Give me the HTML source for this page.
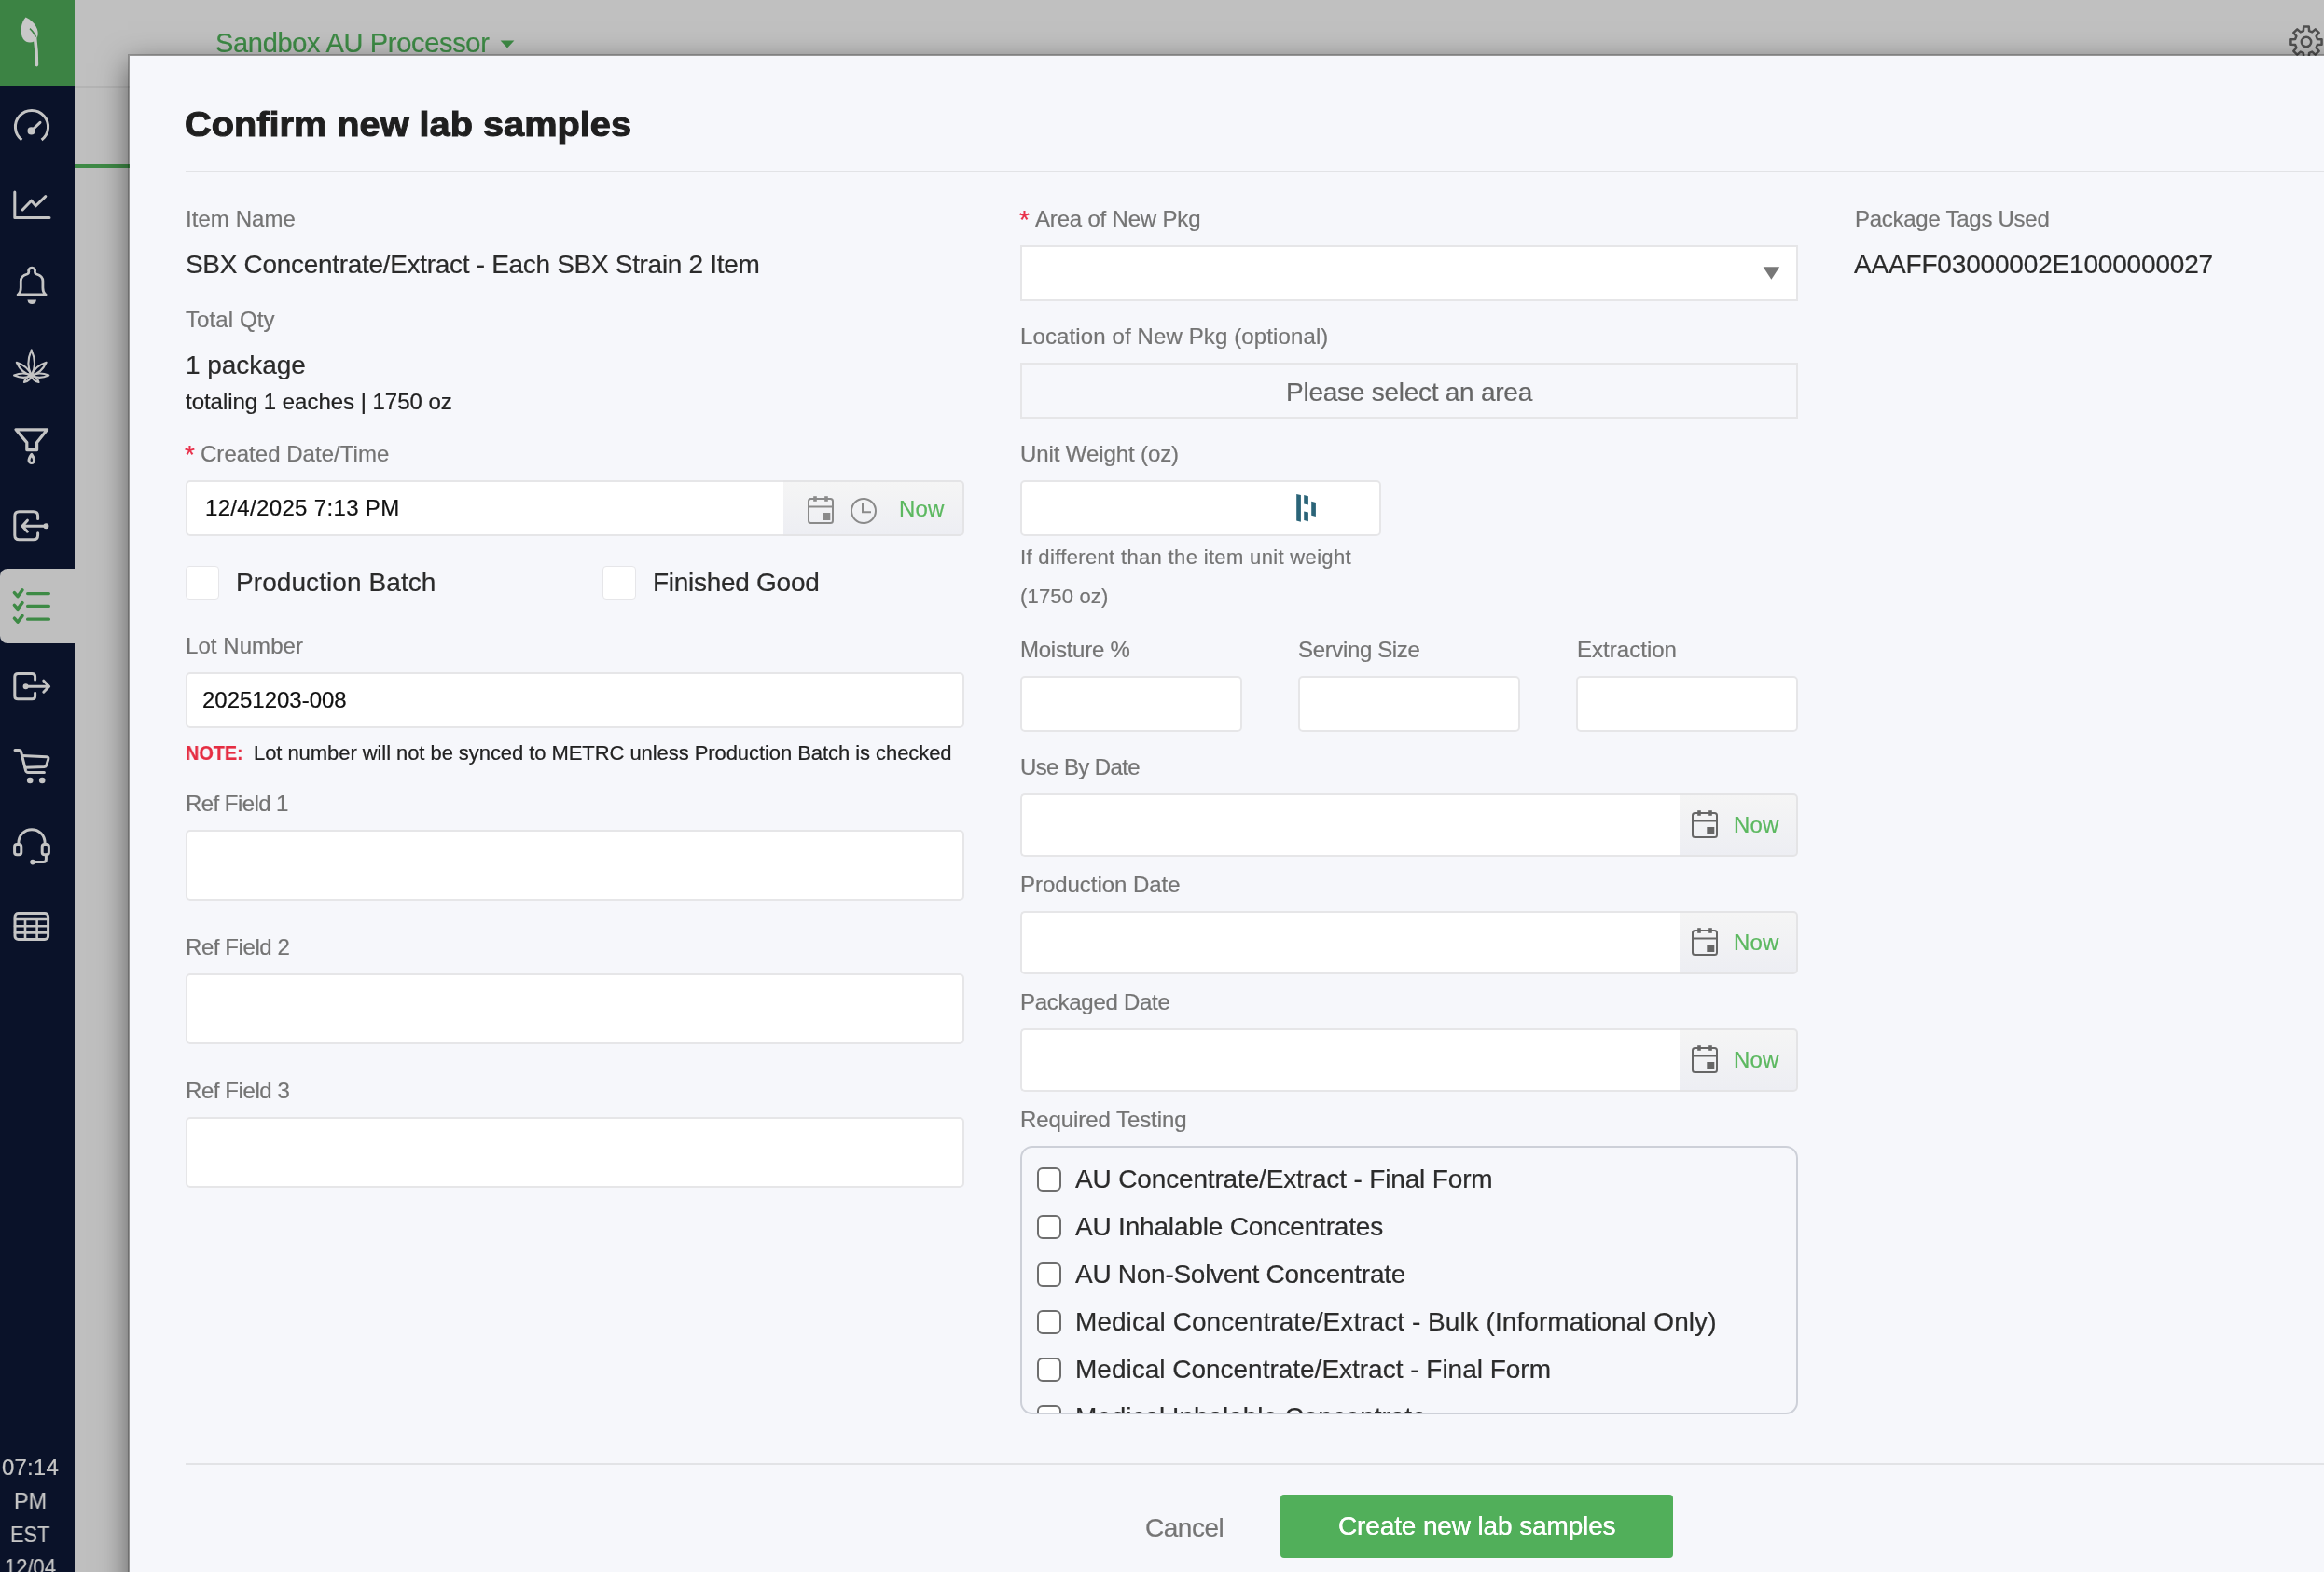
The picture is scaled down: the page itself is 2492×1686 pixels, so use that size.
<!DOCTYPE html>
<html><head><meta charset="utf-8"><title>Confirm new lab samples</title>
<style>
html,body{margin:0;padding:0}
body{width:2492px;height:1686px;overflow:hidden;position:relative;background:#bfbfbf;font-family:"Liberation Sans",sans-serif}
.abs{position:absolute}
.t{position:absolute;white-space:pre;line-height:1;font-family:"Liberation Sans",sans-serif;-webkit-text-stroke:0.22px currentColor;will-change:transform}
.inp{position:absolute;box-sizing:border-box;background:#fff;border:2px solid #e6e6e8;border-radius:5px}
.addon{position:absolute;box-sizing:border-box;background:linear-gradient(#f5f5f5,#edeef3);border:2px solid #e4e4e6;border-left:none;border-radius:0 5px 5px 0}
.cb{position:absolute;left:16px;width:26px;height:26px;box-sizing:border-box;border:2.2px solid #6e6e6e;border-radius:6px;background:#fff}
.bigcb{position:absolute;width:36px;height:36px;box-sizing:border-box;border:1.5px solid #e6e6e9;border-radius:4px;background:#fff}
svg{position:absolute;overflow:visible}
.ic{fill:none;stroke:#c4c4c4;stroke-width:3;stroke-linecap:round;stroke-linejoin:round}
</style></head>
<body>
<!-- dimmed page behind modal -->
<div class="abs" style="left:80px;top:0;width:2412px;height:92px;background:#c0c0c0;border-bottom:2px solid #b4b4b4"></div>
<div class="abs" style="left:80px;top:176px;width:70px;height:4px;background:#3e8a46"></div>

<!-- gear -->
<svg style="left:2453px;top:25px" width="40" height="40" viewBox="-20 -20 40 40">
 <g fill="none" stroke="#505050" stroke-width="2.5" stroke-linejoin="round">
 <path d="M3.08 -11.91 L2.77 -16.57 L-2.77 -16.57 L-3.08 -11.91 L-6.24 -10.60 L-9.76 -13.68 L-13.68 -9.76 L-10.60 -6.24 L-11.91 -3.08 L-16.57 -2.77 L-16.57 2.77 L-11.91 3.08 L-10.60 6.24 L-13.68 9.76 L-9.76 13.68 L-6.24 10.60 L-3.08 11.91 L-2.77 16.57 L2.77 16.57 L3.08 11.91 L6.24 10.60 L9.76 13.68 L13.68 9.76 L10.60 6.24 L11.91 3.08 L16.57 2.77 L16.57 -2.77 L11.91 -3.08 L10.60 -6.24 L13.68 -9.76 L9.76 -13.68 L6.24 -10.60 Z"/>
 <circle cx="0" cy="0" r="5.2"/>
 </g>
</svg>

<div class="t" style="top:32px;font-size:29px;color:#3d8a45;letter-spacing:-0.316px;left:231.00px;">Sandbox AU Processor</div>
<svg style="left:536px;top:43px" width="16" height="9" viewBox="0 0 16 9"><path d="M0.6 0.6 H15.4 L8 8.4 Z" fill="#3d8a45"/></svg>
<!-- sidebar -->
<div class="abs" style="left:0;top:0;width:80px;height:1686px;background:#0a1229"></div>
<div class="abs" style="left:0;top:0;width:80px;height:92px;background:#3c8344"></div>
<div class="abs" style="left:0;top:610px;width:80px;height:80px;background:#bfbfbf;border-radius:8px 0 0 8px"></div>
<svg style="left:0;top:0" width="80" height="1686" viewBox="0 0 80 1686">
<path d="M27.6 18.6 C22.5 24 20.5 35.5 25 42 C29 47.5 37.5 46.5 40 40 C42.5 33 38 23.5 27.6 18.6 Z" fill="#c8c8c8"/>
<path d="M32 30.6 Q37.4 35.6 39.4 42.4" fill="none" stroke="#3c8344" stroke-width="1.5"/>
<path d="M37.6 41 Q39.6 55 39.4 69.6" fill="none" stroke="#c8c8c8" stroke-width="3.6" stroke-linecap="round"/>
<g class="ic">
<path d="M23.41 150.06 A17.6 17.6 0 1 1 44.59 150.06" stroke-linecap="butt"/>
<path d="M34 140 L43 131.4"/>
<circle cx="33.6" cy="140.4" r="2.6" fill="#c4c4c4"/>
<path d="M15.8 206 V233.4 H53"/>
<path d="M24.2 225 L33.6 215.2 L38.4 220.8 L48.8 210.6"/>
<path d="M19.2 316 H49"/>
<path d="M20 315.4 C22 313.4 22.3 311 22.3 308.6 V301.6 C22.3 297.6 25.2 295 29.2 294 C30.4 293.6 30.8 293 30.8 291.8 A3.5 3.5 0 1 1 37.4 291.8 C37.4 293 37.8 293.6 39 294 C43 295 45.9 297.6 45.9 301.6 V308.6 C45.9 311 46.2 313.4 48.2 315.4" stroke-width="2.8"/>
<path d="M29.4 321.4 H39 Q38.2 326 34.2 326 Q30.2 326 29.4 321.4 Z" fill="#c4c4c4" stroke="none"/>
</g>
<g fill="none" stroke="#c4c4c4" stroke-width="2.1" stroke-linejoin="round">
<path d="M33.7 402.8 Q40.3 390.5 33.7 375.4 Q27.1 390.5 33.7 402.8Z"/>
<path d="M33.7 402.8 Q44.3 400.4 49.6 388.8 Q37.4 392.6 33.7 402.8Z"/>
<path d="M33.7 402.8 Q30.0 392.6 17.8 388.8 Q23.1 400.4 33.7 402.8Z"/>
<path d="M33.7 402.8 Q42.1 407.0 52.3 402.5 Q42.0 398.4 33.7 402.8Z"/>
<path d="M33.7 402.8 Q25.4 398.4 15.1 402.5 Q25.3 407.0 33.7 402.8Z"/>
<path d="M33.7 402.8 Q34.9 408.5 41.5 410.0 Q39.4 403.6 33.7 402.8Z"/>
<path d="M33.7 402.8 Q28.0 403.6 25.9 410.0 Q32.5 408.5 33.7 402.8Z"/>
</g>
<g class="ic">
<path d="M17 460.8 H50.6 L39.6 474.6 V482.6 H28.8 V474.6 Z" stroke-width="3.2"/>
<path d="M33.8 487.4 C31.4 491 31 492.4 31 493.8 A2.8 2.8 0 0 0 36.6 493.8 C36.6 492.4 36.2 491 33.8 487.4 Z" stroke-width="3"/>
<path d="M40.6 556.4 V553.6 Q40.6 548.8 35.8 548.8 H20.6 Q15.8 548.8 15.8 553.6 V574 Q15.8 578.8 20.6 578.8 H35.8 Q40.6 578.8 40.6 574 V571.8"/>
<path d="M24.4 564.2 H49 M29.4 558.2 L24 564.2 L29.4 570.2"/>
<circle cx="49.4" cy="564.2" r="2.2" fill="#c4c4c4" stroke-width="1.6"/>
<path d="M37.6 729 V725.8 Q37.6 722.4 34.2 722.4 H19.2 Q15.8 722.4 15.8 725.8 V746.4 Q15.8 749.8 19.2 749.8 H34.2 Q37.6 749.8 37.6 746.4 V743.2"/>
<path d="M27.8 736.2 H52.2 M46.8 730.2 L52.6 736.2 L46.8 742.2"/>
<circle cx="27.6" cy="736.2" r="2.2" fill="#c4c4c4" stroke-width="1.6"/>
<path d="M16 804.6 H20.2 Q22 804.6 22.6 806.4 L27.6 826.6 Q28.2 828.4 30 828.4 H47.4"/>
<path d="M24 810.6 L50 811.8 Q52.4 812 51.8 814.2 L49.8 820.6 Q49.2 822.2 47.4 822.4 L27 823.2"/>
<circle cx="32.2" cy="837" r="3.3" fill="#c4c4c4" stroke="none"/><circle cx="45.2" cy="837" r="3.3" fill="#c4c4c4" stroke="none"/>
<path d="M19.8 905 C19.8 884.6 48.2 884.6 48.2 905"/>
<rect x="15.6" y="905.4" width="7.2" height="11.4" rx="2.6"/><rect x="45.2" y="905.4" width="7.2" height="11.4" rx="2.6"/>
<path d="M49.4 917 V921.6 Q49.4 924.6 46.4 924.6 H36"/>
<circle cx="35" cy="924.6" r="2" fill="#c4c4c4" stroke-width="1.6"/>
<rect x="16" y="979.6" width="35.6" height="28" rx="3.6"/>
<path d="M16 986 H51.6 M16 993.2 H51.6 M16 1000.4 H51.6 M27 986 V1007.6 M39.6 986 V1007.6" stroke-width="2.6"/>
</g>
<g fill="none" stroke="#3d8a45" stroke-width="3.2" stroke-linecap="round" stroke-linejoin="round">
<path d="M29.6 636.6 H52.4"/><path d="M15.4 635.6 L19 639.6 L24 632.8" stroke-width="3.5"/>
<path d="M29.6 650.4 H52.4"/><path d="M15.4 649.4 L19 653.4 L24 646.6" stroke-width="3.5"/>
<path d="M29.6 664.2 H52.4"/><path d="M15.4 663.2 L19 667.2 L24 660.4" stroke-width="3.5"/>
</g>
</svg>

<!-- modal -->
<div class="abs" style="left:137px;top:58px;width:2500px;height:1800px;background:#f6f7fb;border:2px solid rgba(0,0,0,.22);background-clip:padding-box;box-shadow:0 10px 30px rgba(0,0,0,.5)"></div>

<!-- title -->
<div class="t" style="left:198px;top:115.5px;font-size:36px;font-weight:700;color:#1f1f1f;-webkit-text-stroke:1px #1f1f1f;transform-origin:0 0;transform:scaleX(1.1034)">Confirm new lab samples</div>
<div class="abs" style="left:199px;top:183px;width:2300px;height:2px;background:#e2e3e6"></div>
<div class="abs" style="left:199px;top:1569px;width:2300px;height:2px;background:#e2e3e6"></div>

<!-- column 1 fields -->
<div class="inp" style="left:199px;top:515px;width:643px;height:60px;border-radius:5px 0 0 5px;border-right:none"></div>
<div class="addon" style="left:840px;top:515px;width:194px;height:60px"></div>
<div class="bigcb" style="left:199px;top:607px"></div>
<div class="bigcb" style="left:646px;top:607px"></div>
<div class="inp" style="left:199px;top:721px;width:835px;height:60px"></div>
<div class="inp" style="left:199px;top:890px;width:835px;height:76px"></div>
<div class="inp" style="left:199px;top:1044px;width:835px;height:76px"></div>
<div class="inp" style="left:199px;top:1198px;width:835px;height:76px"></div>

<!-- column 2 fields -->
<div class="inp" style="left:1094px;top:263px;width:834px;height:60px;border-radius:0"></div>
<svg style="left:1890px;top:286px" width="19" height="14" viewBox="0 0 19 14"><path d="M0.6 0.2 L18.2 0.2 L9.4 13.8 Z" fill="#777"/></svg>
<div class="inp" style="left:1094px;top:389px;width:834px;height:60px;border-radius:0;background:#f6f7fb"></div>
<div class="inp" style="left:1094px;top:515px;width:387px;height:60px"></div>
<svg style="left:1389px;top:529px" width="24" height="32" viewBox="1389 529 24 32"><g fill="#2b6478">
 <path d="M1390.2 530 L1394.9 531 L1394.9 559.8 L1390.2 558.6 Z"/>
 <path d="M1398.2 531 L1402.9 532.2 L1402.9 541.6 L1398.2 540.4 Z"/>
 <path d="M1398.2 548.4 L1402.9 549.6 L1402.9 559.2 L1398.2 558 Z"/>
 <path d="M1406.2 537.8 L1410.9 539 L1410.9 554 L1406.2 552.8 Z"/>
</g></svg>
<div class="inp" style="left:1094px;top:725px;width:238px;height:60px"></div>
<div class="inp" style="left:1392px;top:725px;width:238px;height:60px"></div>
<div class="inp" style="left:1690px;top:725px;width:238px;height:60px"></div>
<div class="inp" style="left:1094px;top:851px;width:709px;height:68px;border-radius:5px 0 0 5px;border-right:none"></div>
<div class="addon" style="left:1801px;top:851px;width:127px;height:68px"></div>
<svg style="left:1814.4px;top:868.6px" width="28" height="30" viewBox="0 -2 28 30">
<g fill="none" stroke="#666" stroke-width="2"><rect x="1" y="1" width="26" height="26" rx="2.5"/><path d="M1 9.5 H27"/></g>
<g fill="#666"><rect x="6.2" y="-1.8" width="3.6" height="5.6"/><rect x="18.2" y="-1.8" width="3.6" height="5.6"/><rect x="16.3" y="16" width="8" height="8"/></g></svg>
<div class="inp" style="left:1094px;top:977px;width:709px;height:68px;border-radius:5px 0 0 5px;border-right:none"></div>
<div class="addon" style="left:1801px;top:977px;width:127px;height:68px"></div>
<svg style="left:1814.4px;top:994.6px" width="28" height="30" viewBox="0 -2 28 30">
<g fill="none" stroke="#666" stroke-width="2"><rect x="1" y="1" width="26" height="26" rx="2.5"/><path d="M1 9.5 H27"/></g>
<g fill="#666"><rect x="6.2" y="-1.8" width="3.6" height="5.6"/><rect x="18.2" y="-1.8" width="3.6" height="5.6"/><rect x="16.3" y="16" width="8" height="8"/></g></svg>
<div class="inp" style="left:1094px;top:1103px;width:709px;height:68px;border-radius:5px 0 0 5px;border-right:none"></div>
<div class="addon" style="left:1801px;top:1103px;width:127px;height:68px"></div>
<svg style="left:1814.4px;top:1120.6px" width="28" height="30" viewBox="0 -2 28 30">
<g fill="none" stroke="#666" stroke-width="2"><rect x="1" y="1" width="26" height="26" rx="2.5"/><path d="M1 9.5 H27"/></g>
<g fill="#666"><rect x="6.2" y="-1.8" width="3.6" height="5.6"/><rect x="18.2" y="-1.8" width="3.6" height="5.6"/><rect x="16.3" y="16" width="8" height="8"/></g></svg>

<!-- required testing -->
<div class="abs" style="left:1094px;top:1229px;width:834px;height:288px;box-sizing:border-box;border:2px solid #cdd0d8;border-radius:13px;overflow:hidden">
<div class="cb" style="top:21px"></div><div class="t" style="left:57px;top:20px;font-size:28px;color:#2b2b2b;letter-spacing:-0.152px">AU Concentrate/Extract - Final Form</div>
<div class="cb" style="top:72px"></div><div class="t" style="left:57px;top:71px;font-size:28px;color:#2b2b2b;letter-spacing:-0.186px">AU Inhalable Concentrates</div>
<div class="cb" style="top:123px"></div><div class="t" style="left:57px;top:122px;font-size:28px;color:#2b2b2b;letter-spacing:-0.272px">AU Non-Solvent Concentrate</div>
<div class="cb" style="top:174px"></div><div class="t" style="left:57px;top:173px;font-size:28px;color:#2b2b2b;letter-spacing:0.051px">Medical Concentrate/Extract - Bulk (Informational Only)</div>
<div class="cb" style="top:225px"></div><div class="t" style="left:57px;top:224px;font-size:28px;color:#2b2b2b;letter-spacing:-0.010px">Medical Concentrate/Extract - Final Form</div>
<div class="cb" style="top:276px"></div><div class="t" style="left:57px;top:275px;font-size:28px;color:#2b2b2b;letter-spacing:-0.060px">Medical Inhalable Concentrate</div>
</div>

<!-- footer -->
<div class="abs" style="left:1373px;top:1603px;width:421px;height:68px;background:#51af5a;border-radius:4px"></div>

<!-- calendar / clock icons in created date -->
<svg style="left:865.8px;top:532px" width="28" height="30" viewBox="0 -2 28 30">
<g fill="none" stroke="#8a8a8a" stroke-width="2"><rect x="1" y="1" width="26" height="26" rx="2.5"/><path d="M1 9.5 H27"/></g>
<g fill="#8a8a8a"><rect x="6.2" y="-1.8" width="3.6" height="5.6"/><rect x="18.2" y="-1.8" width="3.6" height="5.6"/><rect x="16.3" y="16" width="8" height="8"/></g></svg>
<svg style="left:910.5px;top:533px" width="30" height="30" viewBox="-15 -15 30 30">
<g fill="none" stroke="#8a8a8a" stroke-width="2"><circle cx="0" cy="0" r="13"/><path d="M-1 -8 V1.2 H8"/></g></svg>

<div class="t" style="top:223px;font-size:24px;color:#747474;letter-spacing:0.058px;left:199.00px;">Item Name</div>
<div class="t" style="top:270px;font-size:28px;color:#2b2b2b;letter-spacing:-0.308px;left:198.50px;">SBX Concentrate/Extract - Each SBX Strain 2 Item</div>
<div class="t" style="top:331px;font-size:24px;color:#747474;letter-spacing:0.089px;left:198.50px;">Total Qty</div>
<div class="t" style="top:378px;font-size:28px;color:#2b2b2b;letter-spacing:-0.058px;left:198.80px;">1 package</div>
<div class="t" style="top:419px;font-size:24px;color:#222;letter-spacing:-0.026px;left:198.75px;">totaling 1 eaches | 1750 oz</div>
<div class="t" style="top:474px;font-size:28px;color:#e8304a;left:198.35px;">*</div>
<div class="t" style="top:475px;font-size:24px;color:#747474;letter-spacing:0.026px;left:215.20px;">Created Date/Time</div>
<div class="t" style="top:533px;font-size:24px;color:#111;letter-spacing:0.334px;left:220.00px;">12/4/2025 7:13 PM</div>
<div class="t" style="top:534px;font-size:24px;color:#5cb860;letter-spacing:0.161px;left:964.00px;">Now</div>
<div class="t" style="top:611px;font-size:28px;color:#2b2b2b;letter-spacing:0.078px;left:253.00px;">Production Batch</div>
<div class="t" style="top:611px;font-size:28px;color:#2b2b2b;letter-spacing:-0.278px;left:700.00px;">Finished Good</div>
<div class="t" style="top:681px;font-size:24px;color:#747474;letter-spacing:0.061px;left:199.00px;">Lot Number</div>
<div class="t" style="top:739px;font-size:24px;color:#111;letter-spacing:-0.011px;left:216.50px;">20251203-008</div>
<div class="t" style="top:797px;font-size:22px;color:#e52d42;font-weight:700;transform-origin:0 0;transform:scaleX(0.9013);left:198.50px;">NOTE:</div>
<div class="t" style="top:797px;font-size:22px;color:#222;letter-spacing:-0.065px;left:272.00px;">Lot number will not be synced to METRC unless Production Batch is checked</div>
<div class="t" style="top:850px;font-size:24px;color:#747474;letter-spacing:-0.560px;left:199.00px;">Ref Field 1</div>
<div class="t" style="top:1004px;font-size:24px;color:#747474;letter-spacing:-0.415px;left:199.00px;">Ref Field 2</div>
<div class="t" style="top:1158px;font-size:24px;color:#747474;letter-spacing:-0.415px;left:199.00px;">Ref Field 3</div>
<div class="t" style="top:222px;font-size:28px;color:#e8304a;left:1093.35px;">*</div>
<div class="t" style="top:223px;font-size:24px;color:#747474;letter-spacing:-0.186px;left:1110.20px;">Area of New Pkg</div>
<div class="t" style="top:349px;font-size:24px;color:#747474;letter-spacing:0.121px;left:1093.50px;">Location of New Pkg (optional)</div>
<div class="t" style="top:407px;font-size:28px;color:#666;letter-spacing:-0.251px;left:1379.00px;">Please select an area</div>
<div class="t" style="top:475px;font-size:24px;color:#747474;letter-spacing:-0.101px;left:1094.00px;">Unit Weight (oz)</div>
<div class="t" style="top:587px;font-size:22px;color:#747474;letter-spacing:0.341px;left:1094.00px;">If different than the item unit weight</div>
<div class="t" style="top:629px;font-size:22px;color:#747474;letter-spacing:0.172px;left:1094.00px;">(1750 oz)</div>
<div class="t" style="top:685px;font-size:24px;color:#747474;letter-spacing:-0.255px;left:1094.00px;">Moisture %</div>
<div class="t" style="top:685px;font-size:24px;color:#747474;letter-spacing:-0.353px;left:1391.50px;">Serving Size</div>
<div class="t" style="top:685px;font-size:24px;color:#747474;letter-spacing:0.028px;left:1690.50px;">Extraction</div>
<div class="t" style="top:811px;font-size:24px;color:#747474;letter-spacing:-0.611px;left:1094.00px;">Use By Date</div>
<div class="t" style="top:937px;font-size:24px;color:#747474;letter-spacing:-0.041px;left:1094.00px;">Production Date</div>
<div class="t" style="top:1063px;font-size:24px;color:#747474;letter-spacing:-0.278px;left:1094.00px;">Packaged Date</div>
<div class="t" style="top:1189px;font-size:24px;color:#747474;letter-spacing:-0.073px;left:1094.00px;">Required Testing</div>
<div class="t" style="top:873px;font-size:24px;color:#5cb860;letter-spacing:0.161px;left:1858.50px;">Now</div>
<div class="t" style="top:999px;font-size:24px;color:#5cb860;letter-spacing:0.161px;left:1858.50px;">Now</div>
<div class="t" style="top:1125px;font-size:24px;color:#5cb860;letter-spacing:0.161px;left:1858.50px;">Now</div>
<div class="t" style="top:223px;font-size:24px;color:#747474;letter-spacing:-0.267px;left:1989.00px;">Package Tags Used</div>
<div class="t" style="top:270px;font-size:28px;color:#2b2b2b;letter-spacing:-0.176px;left:1988.00px;">AAAFF03000002E1000000027</div>
<div class="t" style="top:1625px;font-size:28px;color:#757575;letter-spacing:-0.495px;left:1228.00px;">Cancel</div>
<div class="t" style="top:1623px;font-size:28px;color:#ffffff;letter-spacing:-0.131px;left:1435.00px;text-shadow:0 0 0.6px #fff;">Create new lab samples</div>
<div class="t" style="top:1562px;font-size:24px;color:#c6c6c6;letter-spacing:0.167px;left:1.83px;">07:14</div>
<div class="t" style="top:1598px;font-size:24px;color:#c6c6c6;transform-origin:0 0;transform:scaleX(0.9750);left:14.65px;">PM</div>
<div class="t" style="top:1634px;font-size:24px;color:#c6c6c6;transform-origin:0 0;transform:scaleX(0.9060);left:11.05px;">EST</div>
<div class="t" style="top:1669px;font-size:24px;color:#c6c6c6;transform-origin:0 0;transform:scaleX(0.9157);left:4.70px;">12/04</div>
</body></html>
